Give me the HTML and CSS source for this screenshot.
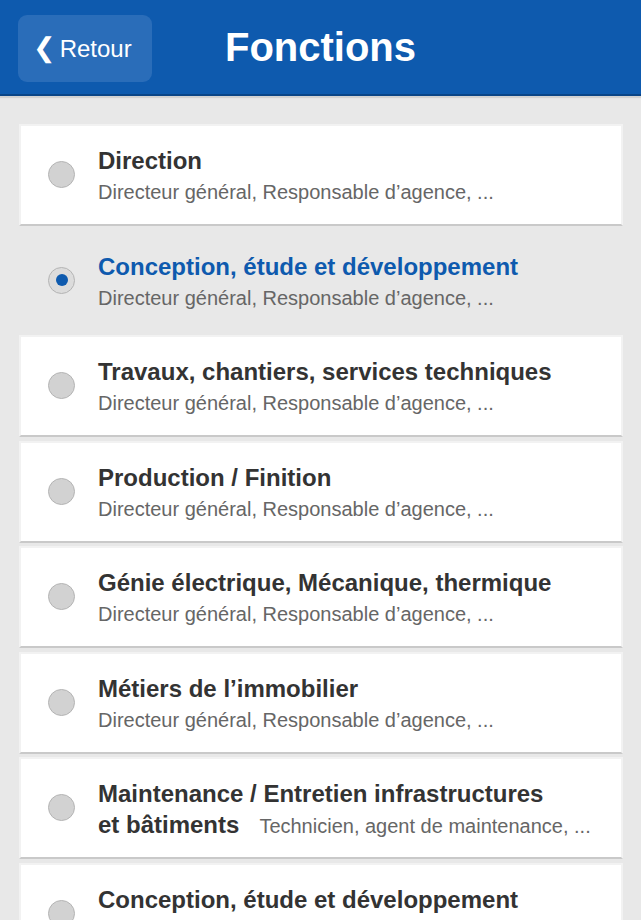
FILE: index.html
```html
<!DOCTYPE html>
<html lang="fr">
<head>
<meta charset="utf-8">
<title>Fonctions</title>
<link rel="stylesheet" href="styles.css">
</head>
<body>
<header class="topbar">
  <button class="back"><span class="chev">❮</span>Retour</button>
  <h1 class="title">Fonctions</h1>
</header>
<main class="list">
  <div class="item">
    <span class="radio"></span>
    <div class="text"><div class="name">Direction</div><div class="sub">Directeur général, Responsable d’agence, ...</div></div>
  </div>
  <div class="item selected">
    <span class="radio"></span>
    <div class="text"><div class="name">Conception, étude et développement</div><div class="sub">Directeur général, Responsable d’agence, ...</div></div>
  </div>
  <div class="item">
    <span class="radio"></span>
    <div class="text"><div class="name">Travaux, chantiers, services techniques</div><div class="sub">Directeur général, Responsable d’agence, ...</div></div>
  </div>
  <div class="item">
    <span class="radio"></span>
    <div class="text"><div class="name">Production / Finition</div><div class="sub">Directeur général, Responsable d’agence, ...</div></div>
  </div>
  <div class="item">
    <span class="radio"></span>
    <div class="text"><div class="name">Génie électrique, Mécanique, thermique</div><div class="sub">Directeur général, Responsable d’agence, ...</div></div>
  </div>
  <div class="item">
    <span class="radio"></span>
    <div class="text"><div class="name">Métiers de l’immobilier</div><div class="sub">Directeur général, Responsable d’agence, ...</div></div>
  </div>
  <div class="item">
    <span class="radio"></span>
    <div class="text"><div class="name">Maintenance / Entretien infrastructures<br>et bâtiments<span class="sub inline">Technicien, agent de maintenance, ...</span></div></div>
  </div>
  <div class="item">
    <span class="radio"></span>
    <div class="text"><div class="name">Conception, étude et développement</div><div class="sub">Directeur général, Responsable d’agence, ...</div></div>
  </div>
</main>
</body>
</html>
```

FILE: styles.css
```css
* { box-sizing: border-box; }
html, body {
  margin: 0;
  padding: 0;
  background: #e8e8e8;
  font-family: "Liberation Sans", Arial, sans-serif;
  overflow: hidden;
}
.topbar {
  height: 96px;
  background: #0e5aae;
  border-bottom: 2px solid #0a4587;
  box-shadow: 0 2px 1px #d2d2d2;
  display: flex;
  align-items: center;
  justify-content: center;
  position: relative;
}
.back {
  position: absolute;
  left: 18px;
  top: 15px;
  width: 134px;
  height: 67px;
  border: none;
  border-radius: 9px;
  background: #2a6db9;
  color: #fff;
  font-family: "Liberation Sans", Arial, sans-serif;
  font-size: 24px;
  display: flex;
  align-items: center;
  padding: 0 0 0 15px;
}
.chev {
  font-family: "DejaVu Sans", sans-serif;
  font-size: 27px;
  margin-right: 4px;
  position: relative;
  top: -1px;
}
.title {
  margin: 0;
  color: #fff;
  font-size: 40px;
  font-weight: bold;
}
.list {
  padding: 28px 18px 0 19px;
  display: flex;
  flex-direction: column;
  gap: 3.5px;
}
.item {
  height: 102px;
  background: #fff;
  border: 2px solid #f2f2f2;
  border-bottom: 2px solid #c9c9c9;
  display: flex;
  align-items: flex-start;
  padding: 19px 0 0 27px;
  flex-shrink: 0;
}
.item.selected {
  background: transparent;
  border-color: transparent;
}
.radio {
  width: 27px;
  height: 27px;
  border-radius: 50%;
  background: #d2d2d2;
  border: 1px solid #b4b4b4;
  flex-shrink: 0;
  margin: 16px 23px 0 0;
  position: relative;
}
.selected .radio {
  background: #dcdcdc;
}
.selected .radio::after {
  content: "";
  position: absolute;
  left: 6.5px;
  top: 6.5px;
  width: 12px;
  height: 12px;
  border-radius: 50%;
  background: #0e5aae;
}
.name {
  font-size: 24px;
  font-weight: bold;
  color: #333;
  line-height: 31px;
}
.selected .name { color: #0e5aae; }
.sub {
  font-size: 20px;
  font-weight: normal;
  color: #666;
  line-height: 29px;
  margin-top: 2px;
}
.sub.inline {
  margin-left: 20px;
  margin-top: 0;
}
```
